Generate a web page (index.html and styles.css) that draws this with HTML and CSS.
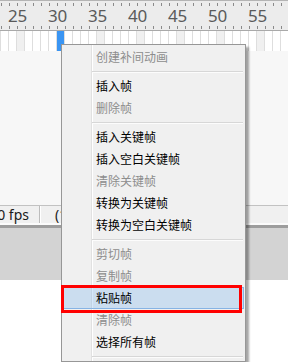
FILE: index.html
```html
<!DOCTYPE html>
<html lang="zh-CN">
<head>
    <meta charset="UTF-8">
    <meta name="viewport" content="width=device-width, initial-scale=1.0">
    <title>时间轴 - 帧菜单</title>
    <link rel="stylesheet" href="styles.css">
</head>
<body>
    <div class="timeline">
        <div class="ruler">
            <div class="ticks"></div>
            <div class="nums">
                <span>25</span><span>30</span><span>35</span><span>40</span><span>45</span><span>50</span><span>55</span>
            </div>
            <div class="ticks"></div>
        </div>
        <div class="frames">
            <div class="playhead"></div>
        </div>
        <div class="stage"></div>
        <div class="status">
            <div class="fps">24.0 fps</div>
            <div class="time">(1.2s)</div>
        </div>
        <div class="dock"></div>
        <div class="blank"></div>
    </div>

    <!-- context menu for the frames -->
    <ul class="menu">
        <li class="item off">创建补间动画</li>
        <li class="sep"></li>
        <li class="item">插入帧</li>
        <li class="item off">删除帧</li>
        <li class="sep"></li>
        <li class="item">插入关键帧</li>
        <li class="item">插入空白关键帧</li>
        <li class="item off">清除关键帧</li>
        <li class="item">转换为关键帧</li>
        <li class="item">转换为空白关键帧</li>
        <li class="sep"></li>
        <li class="item off">剪切帧</li>
        <li class="item off">复制帧</li>
        <li class="item hover">粘贴帧</li>
        <li class="item off">清除帧</li>
        <li class="item">选择所有帧</li>
        <li class="sep"></li>
    </ul>

    <div class="callout"></div>
</body>
</html>
```

FILE: styles.css
```css
html, body {
    margin: 0;
    padding: 0;
    overflow: hidden;
}
body {
    width: 288px;
    height: 362px;
    position: relative;
    background: #fff;
    font-family: "Noto Sans", Arial, sans-serif;
}
.ruler {
    border-top: 1px solid #b4b4b4;
    border-bottom: 1px solid #a9a9a9;
    background: #ececec;
    padding-top: 2px;
    height: 27px;
    display: flex;
    flex-direction: column;
}
.ticks {
    height: 3px;
    background: repeating-linear-gradient(to right, transparent 0 1px, #8a8a8a 1px 2px, transparent 2px 8px);
}
.nums {
    height: 20px;
    line-height: 20px;
    display: flex;
    font-size: 17px;
    color: #5a5a5a;
    white-space: nowrap;
}
.nums span {
    flex: 0 0 40px;
    padding-left: 8px;
    box-sizing: border-box;
    letter-spacing: -0.3px;
}
.ruler .ticks:last-child {
    margin-bottom: 1px;
}
.frames {
    position: relative;
    height: 20px;
    background:
        repeating-linear-gradient(to right, #dedede 0 1px, transparent 1px 8px),
        repeating-linear-gradient(to right, transparent 0 16px, #f0f0f0 16px 24px, transparent 24px 40px),
        #fff;
}
.playhead {
    position: absolute;
    left: 57px;
    top: 0;
    width: 7px;
    height: 20px;
    background: #3a95f3;
}
.stage {
    height: 154px;
    background: #f7f7f7;
}
.status {
    display: flex;
    height: 17px;
    border-top: 1px solid #c2c2c2;
    border-bottom: 2px solid #fbfbfb;
    background: #f0f0f0;
    font-size: 14px;
    line-height: 17px;
    color: #1a1a1a;
}
.fps {
    flex: 0 0 40px;
    min-width: 0;
    padding-right: 10px;
    box-sizing: border-box;
    display: flex;
    justify-content: flex-end;
    white-space: nowrap;
    border-right: 1px solid #bcbcbc;
    box-shadow: 1px 0 0 #fff;
}
.time {
    padding-left: 15px;
    white-space: nowrap;
}
.dock {
    height: 52px;
    border-top: 3px solid #9d9d9d;
    background: #d3d3d3;
}
.blank {
    height: 82px;
    background: #fff;
}
.menu {
    position: absolute;
    left: 61px;
    top: 44px;
    width: 185px;
    box-sizing: border-box;
    margin: 0;
    padding: 1px 0 1px;
    list-style: none;
    border: 1px solid #979797;
    background:
        linear-gradient(to right, transparent 29px, #e1e1e1 29px 30px, #fff 30px 31px, transparent 31px),
        #f0f0f0;
    box-shadow: 3px 3px 2px rgba(0, 0, 0, 0.35);
    font-family: "Noto Sans CJK SC", "Microsoft YaHei", sans-serif;
    font-size: 12px;
    color: #000;
}
.item {
    height: 22px;
    line-height: 22px;
    margin: 0 1px 0 1px;
    padding-left: 33px;
    box-sizing: border-box;
    white-space: nowrap;
}
.item.off {
    color: #8d8d8d;
}
.item.hover {
    background: rgba(120, 180, 240, 0.3);
    border: 1px solid #86b3e4;
    line-height: 20px;
    padding-left: 32px;
}
.sep {
    height: 7px;
    margin: 0 2px 0 30px;
    box-sizing: border-box;
    padding-top: 3px;
}
.sep::before {
    content: "";
    display: block;
    height: 1px;
    background: #d7d7d7;
    border-bottom: 1px solid #fcfcfc;
}
.callout {
    position: absolute;
    left: 61px;
    top: 285px;
    width: 181px;
    height: 28px;
    box-sizing: border-box;
    border: 3px solid #ff0000;
}
```
